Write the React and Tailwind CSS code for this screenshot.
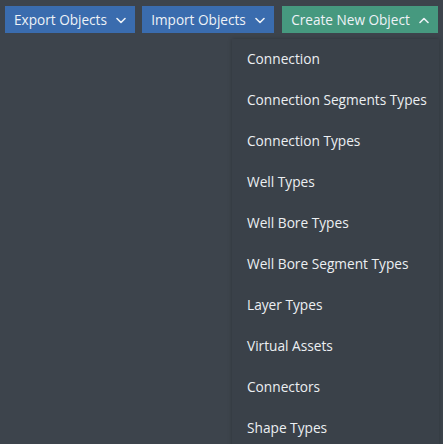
import React from "react";

const items = [
  "Connection",
  "Connection Segments Types",
  "Connection Types",
  "Well Types",
  "Well Bore Types",
  "Well Bore Segment Types",
  "Layer Types",
  "Virtual Assets",
  "Connectors",
  "Shape Types",
];

function Chevron({ up }) {
  return (
    <svg width="10" height="7" viewBox="0 0 10 7" className="ml-[9px]" fill="none" stroke="currentColor" strokeWidth="1.6" strokeLinecap="round" strokeLinejoin="round">
      {up ? <path d="M1 5.5 L5 1.5 L9 5.5" /> : <path d="M1 1.5 L5 5.5 L9 1.5" />}
    </svg>
  );
}

export default function App() {
  return (
    <div className="w-[443px] h-[444px] overflow-hidden bg-[#3d444c] relative" style={{ fontFamily: '"Open Sans", "Noto Sans", sans-serif' }}>
      <div className="flex pt-[6px] pl-[5px] gap-[7px]">
        <button className="h-[27px] w-[130px] pt-[2px] bg-[#3a6cae] text-[#eef2f7] text-[13.6px] flex items-center justify-center">
          Export Objects <Chevron />
        </button>
        <button className="h-[27px] w-[132px] pt-[2px] bg-[#3a6cae] text-[#eef2f7] text-[13.6px] flex items-center justify-center">
          Import Objects <Chevron />
        </button>
        <button className="h-[27px] w-[156px] pt-[2px] bg-[#46997f] text-[#eef2f7] text-[13.6px] flex items-center justify-center ml-[1px]">
          Create New Object <Chevron up />
        </button>
      </div>
      <div className="absolute left-[232px] top-[39px] w-[207px] bg-[#3a4149] shadow-[0_0_4px_rgba(0,0,0,0.25)] flex flex-col">
        {items.map((t) => (
          <div key={t} className="h-[41px] flex items-center pl-[15px] text-[13.7px] text-[#eceff2]">
            {t}
          </div>
        ))}
      </div>
    </div>
  );
}
